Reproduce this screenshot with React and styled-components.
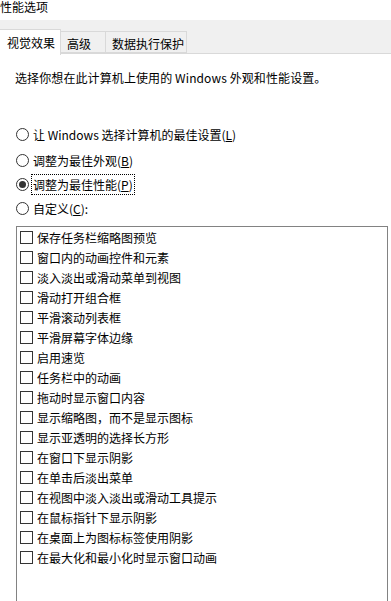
import React from 'react'
import styled, { createGlobalStyle } from 'styled-components'

const Global = createGlobalStyle`
	html, body {
		margin: 0;
		padding: 0;
		background: #fff;
	}
	body {
		font-family: "Noto Sans CJK SC", "Microsoft YaHei", "Noto Sans", sans-serif;
		font-size: 12px;
		color: #000;
	}
`

const tabs = ['视觉效果', '高级', '数据执行保护']
const tabWidths = [62, 46, 82]

const options = [
	{ label: '让 Windows 选择计算机的最佳设置', key: 'L' },
	{ label: '调整为最佳外观', key: 'B' },
	{ label: '调整为最佳性能', key: 'P', checked: true },
	{ label: '自定义', key: 'C', colon: true },
]

const effects = [
	'保存任务栏缩略图预览',
	'窗口内的动画控件和元素',
	'淡入淡出或滑动菜单到视图',
	'滑动打开组合框',
	'平滑滚动列表框',
	'平滑屏幕字体边缘',
	'启用速览',
	'任务栏中的动画',
	'拖动时显示窗口内容',
	'显示缩略图，而不是显示图标',
	'显示亚透明的选择长方形',
	'在窗口下显示阴影',
	'在单击后淡出菜单',
	'在视图中淡入淡出或滑动工具提示',
	'在鼠标指针下显示阴影',
	'在桌面上为图标标签使用阴影',
	'在最大化和最小化时显示窗口动画',
]

function App() {
	return (
		<Page>
			<Global />
			<Title>性能选项</Title>
			<TabStrip>
				{tabs.map((t, i) => (
					<Tab key={t} active={i === 0} style={{ width: tabWidths[i] }}>{t}</Tab>
				))}
			</TabStrip>
			<Content>
				<Intro>选择你想在此计算机上使用的 Windows 外观和性能设置。</Intro>
				<RadioGroup>
					{options.map((o, i) => (
						<RadioRow key={o.key} first={i === 0}>
							<Radio checked={o.checked} />
							<RadioLabel focused={o.checked}>
								{o.label}(<u>{o.key}</u>){o.colon ? ':' : ''}
							</RadioLabel>
						</RadioRow>
					))}
				</RadioGroup>
				<ListBox>
					{effects.map(e => (
						<CheckRow key={e}>
							<CheckBox />
							<span>{e}</span>
						</CheckRow>
					))}
				</ListBox>
			</Content>
		</Page>
	)
}

export default App

const Page = styled.div`
	width: 391px;
	height: 601px;
	overflow: hidden;
	background: #fff;
`

const Title = styled.div`
	height: 20px;
	line-height: 14px;
	white-space: nowrap;
`

const TabStrip = styled.div`
	display: flex;
	align-items: flex-end;
	height: 34px;
	background: #f0f0f0;
	border-bottom: 1px solid #d9d9d9;
	box-sizing: border-box;
`

const Tab = styled.div`
	box-sizing: border-box;
	height: ${p => (p.active ? '26px' : '22px')};
	margin-bottom: ${p => (p.active ? '-2px' : '0')};
	margin-left: -1px;
	padding-left: ${p => (p.active ? '7px' : '6px')};
	padding-top: ${p => (p.active ? '3px' : '2px')};
	line-height: 20px;
	background: ${p => (p.active ? '#fff' : '#f0f0f0')};
	border: 1px solid #d9d9d9;
	border-bottom: ${p => (p.active ? 'none' : '1px solid #d9d9d9')};
	white-space: nowrap;
	z-index: ${p => (p.active ? 1 : 0)};
`

const Content = styled.div`
	padding-left: 16px;
`

const Intro = styled.div`
	margin-top: 14px;
	margin-left: -1px;
	line-height: 20px;
	letter-spacing: 0.1px;
	white-space: nowrap;
`

const RadioGroup = styled.div`
	margin-top: 34px;
	display: flex;
	flex-direction: column;
`

const RadioRow = styled.div`
	display: flex;
	align-items: center;
	height: 24px;
	margin-bottom: ${p => (p.first ? '2px' : '0')};
	white-space: nowrap;
`

const Radio = styled.span`
	box-sizing: border-box;
	width: 13px;
	height: 13px;
	border: 1px solid #333;
	border-radius: 50%;
	flex: none;
	display: flex;
	align-items: center;
	justify-content: center;
	margin-right: 2px;

	&::after {
		content: '';
		display: ${p => (p.checked ? 'block' : 'none')};
		width: 7px;
		height: 7px;
		border-radius: 50%;
		background: #333;
	}
`

const RadioLabel = styled.span`
	box-sizing: border-box;
	line-height: 19px;
	padding: 0 1px;
	border: 1px dotted ${p => (p.focused ? '#000' : 'transparent')};

	u {
		text-underline-offset: 1px;
	}
`

const ListBox = styled.div`
	margin-top: 6px;
	width: 372px;
	height: 420px;
	box-sizing: border-box;
	border: 1px solid #828282;
	padding-left: 3px;
`

const CheckRow = styled.div`
	display: flex;
	align-items: center;
	height: 20px;
	white-space: nowrap;
`

const CheckBox = styled.span`
	box-sizing: border-box;
	width: 13px;
	height: 13px;
	border: 1px solid #333;
	flex: none;
	margin-right: 4px;
`
